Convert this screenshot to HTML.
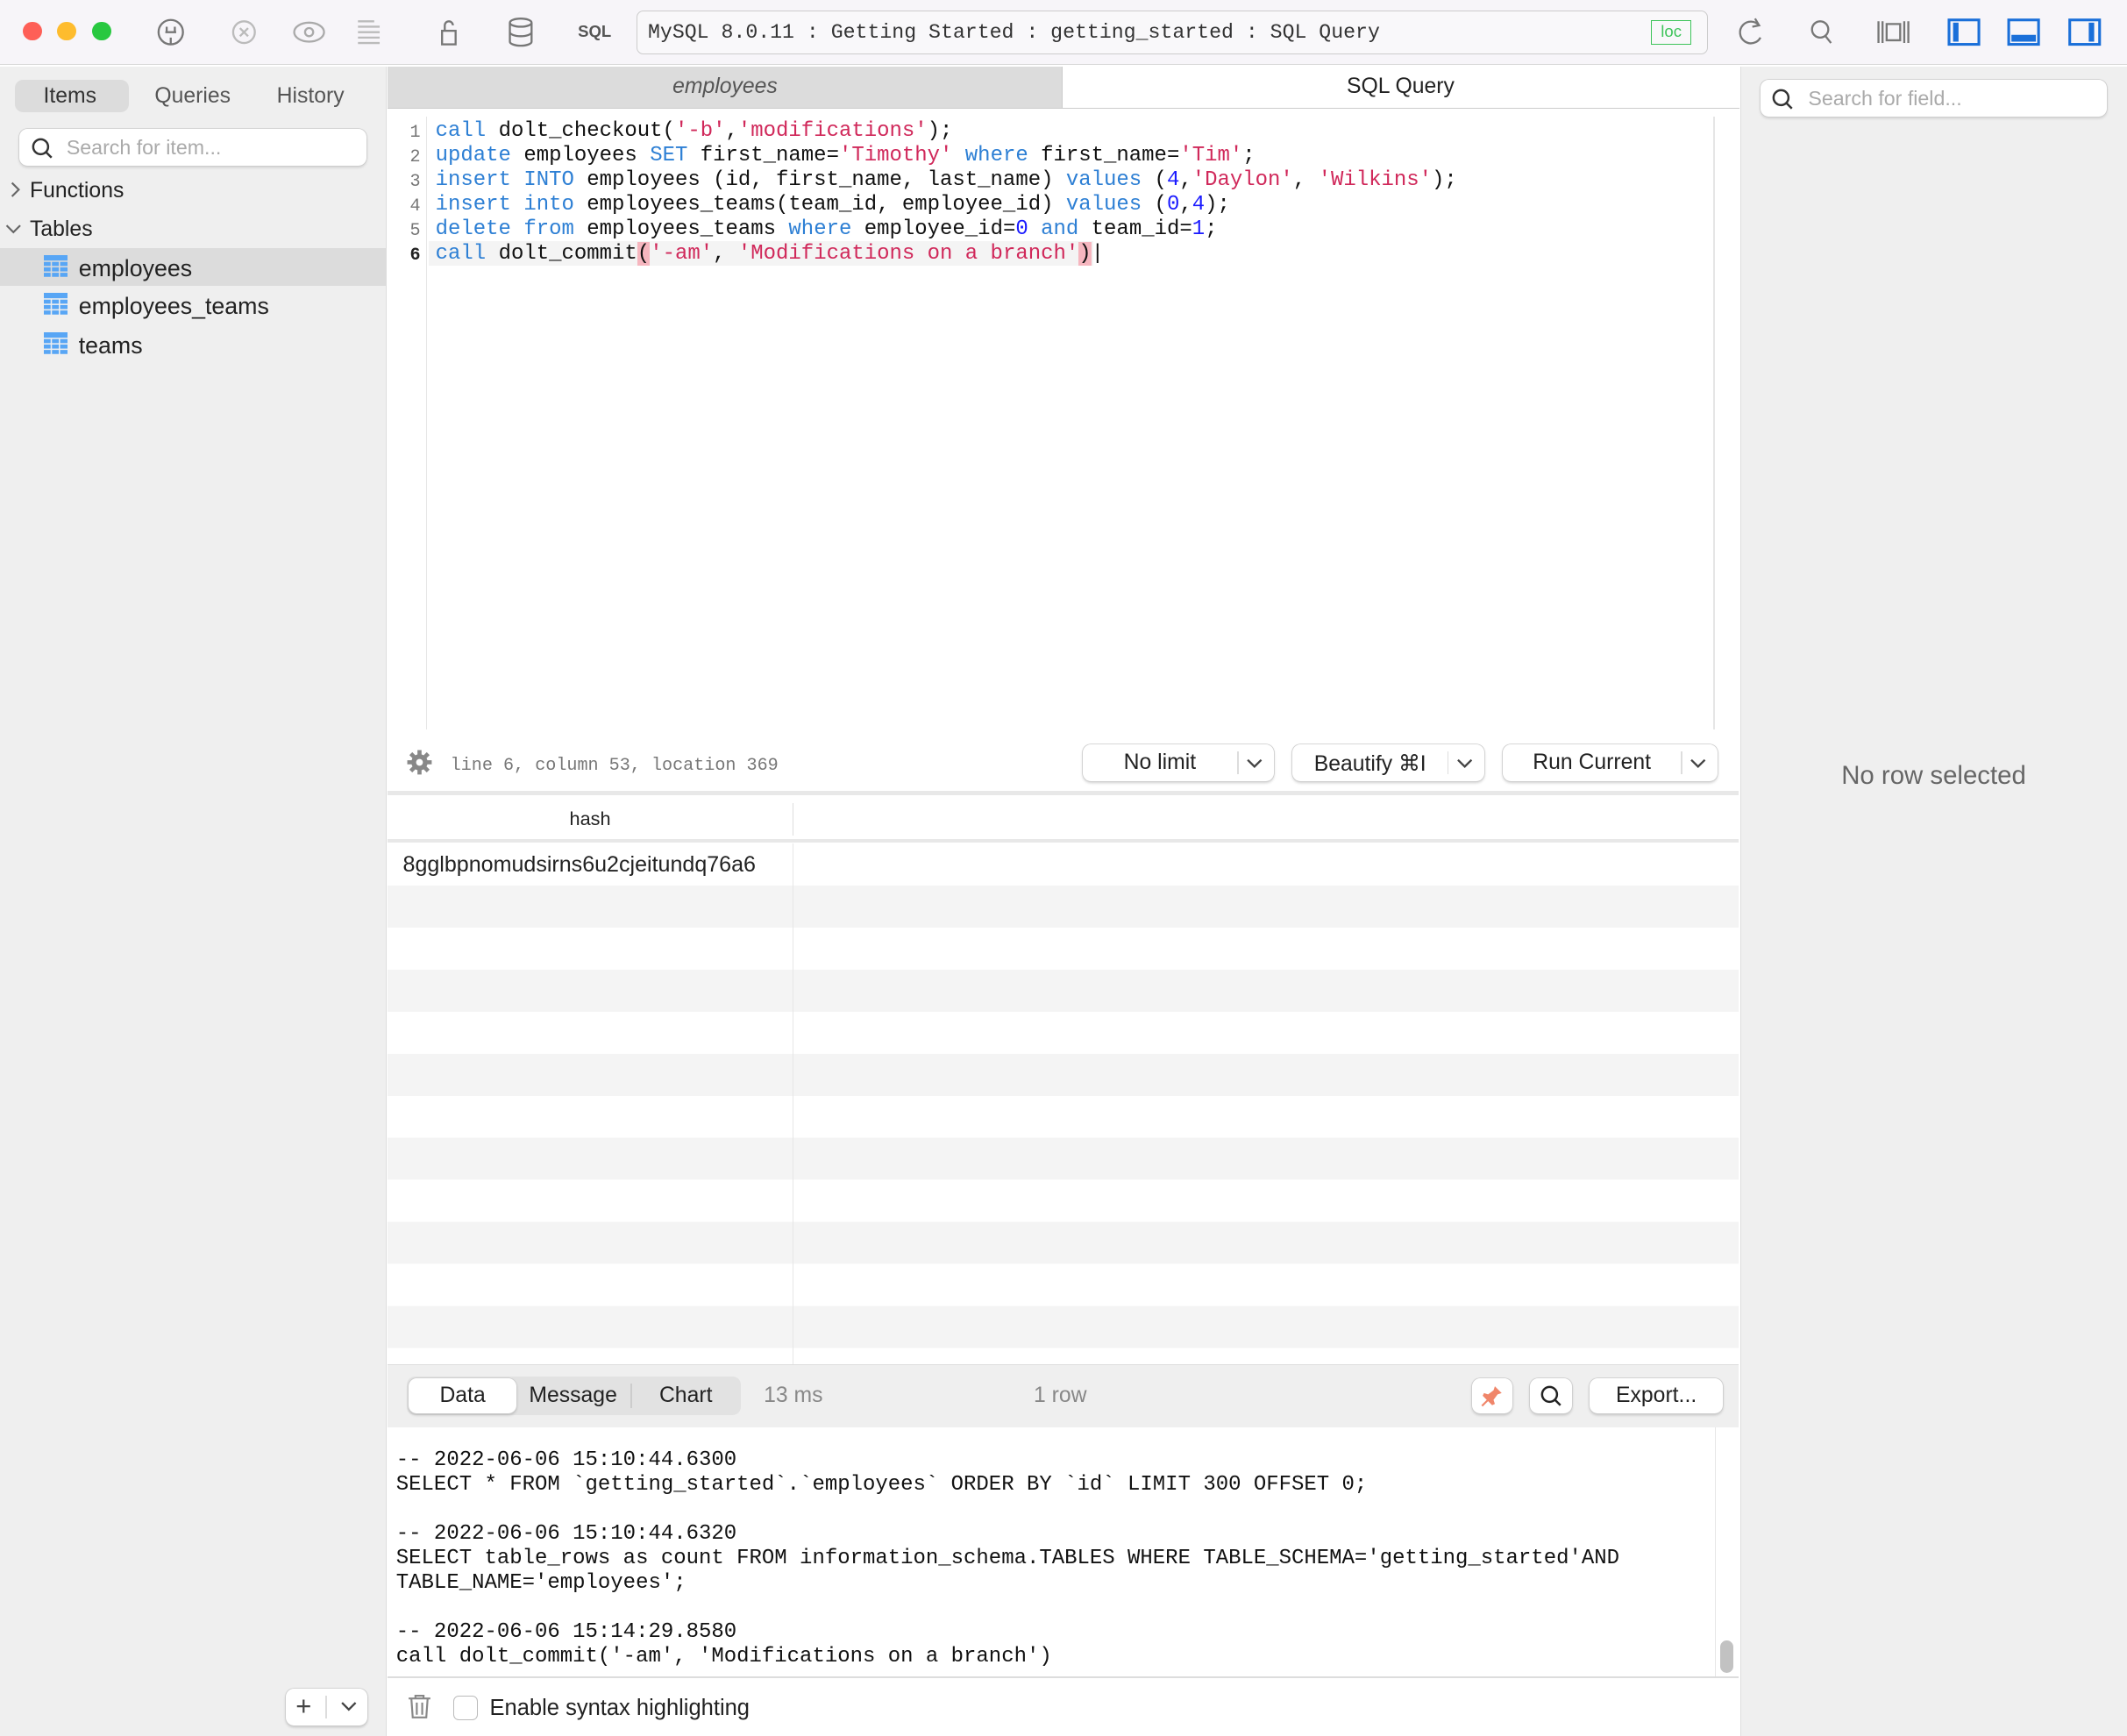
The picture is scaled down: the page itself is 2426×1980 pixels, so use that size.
<!DOCTYPE html>
<html><head><meta charset="utf-8"><style>
*{box-sizing:border-box;margin:0;padding:0}
html,body{width:2426px;height:1980px;overflow:hidden;background:#fff}
#w{zoom:1.5472;width:1568px;height:1280px;position:relative;font-family:"Liberation Sans",sans-serif;color:#222;font-size:16px}
.a{position:absolute}
.mono{font-family:"Liberation Mono",monospace}
.k{color:#2d7fd4}.s{color:#d0285a}.n{color:#1a1aff}
.btn{position:absolute;background:#fff;border-radius:6px;box-shadow:0 0 0 0.5px #ccc,0 1px 2px rgba(0,0,0,.2);font-size:16px;text-align:center}
</style></head><body><div id="w">
<!-- title bar -->
<div class="a" style="left:0;top:0;width:1568px;height:48px;background:#f7f5f9;border-bottom:1px solid #d8d8d8"></div>
<div class="a" style="left:17px;top:16px;width:14px;height:14px;border-radius:50%;background:#fe5f57"></div>
<div class="a" style="left:42px;top:16px;width:14px;height:14px;border-radius:50%;background:#febc2e"></div>
<div class="a" style="left:68px;top:16px;width:14px;height:14px;border-radius:50%;background:#28c840"></div>
<svg class="a" style="left:110px;top:10px" width="360" height="28" fill="none" stroke="#777" stroke-width="1.5">
<circle cx="16" cy="14" r="9"/><path d="M13 10v4M19 10v4M12 14h8M16 18v5"/>
<circle cx="70" cy="14" r="8" stroke="#bbb"/><path d="M67 11l6 6M73 11l-6 6" stroke="#bbb"/>
<ellipse cx="118" cy="14" rx="11" ry="7" stroke="#aaa"/><circle cx="118" cy="14" r="3" stroke="#aaa"/>
<path d="M154 6h12M154 10h16M154 14h16M154 18h16M154 22h16" stroke="#bbb"/>
<rect x="216" y="13" width="10" height="10"/><path d="M218 13v-4a3 3 0 0 1 6 0"/>
<ellipse cx="274" cy="7" rx="8" ry="3"/><path d="M266 7v14a8 3 0 0 0 16 0V7M266 14a8 3 0 0 0 16 0"/>
</svg>
<div class="a" style="left:426px;top:16px;font-size:12px;font-weight:bold;color:#555">SQL</div>
<div class="a mono" style="left:469px;top:8px;width:790px;height:32px;border:1px solid #ccc;border-radius:5px;background:#f9f8fa;font-size:15px;line-height:32px;padding-left:8px;color:#333">MySQL 8.0.11 : Getting Started : getting_started : SQL Query</div>
<div class="a" style="left:1217px;top:15px;width:30px;height:18px;border:1px solid #3ec45a;color:#3ec45a;font-size:12px;text-align:center;line-height:16px">loc</div>
<svg class="a" style="left:1278px;top:10px" width="280" height="28" fill="none" stroke="#777" stroke-width="1.5">
<path d="M19 9a8 8 0 1 0 1 9M16 4l3 5-5 1"/>
<circle cx="64" cy="12" r="6"/><path d="M68 17l4 5"/>
<path d="M107 6v16M110 6v16M126 6v16M129 6v16M113 8h10v12h-10z"/>
<rect x="159" y="5" width="22" height="18" stroke="#1a6fd9" stroke-width="2"/><rect x="162" y="7" width="4" height="14" fill="#1a6fd9" stroke="none"/>
<rect x="203" y="5" width="22" height="18" stroke="#1a6fd9" stroke-width="2"/><rect x="205" y="16" width="18" height="5" fill="#1a6fd9" stroke="none"/>
<rect x="248" y="5" width="22" height="18" stroke="#1a6fd9" stroke-width="2"/><rect x="262" y="7" width="4" height="14" fill="#1a6fd9" stroke="none"/>
</svg>
<!-- left sidebar -->
<div class="a" style="left:0;top:49px;width:285px;height:1231px;background:#efefef;border-right:1px solid #ddd"></div>
<div class="a" style="left:11px;top:59px;width:84px;height:24px;background:#dcdcdc;border-radius:6px"></div>
<div class="a" style="left:32px;top:62px;color:#333">Items</div>
<div class="a" style="left:114px;top:62px;color:#555">Queries</div>
<div class="a" style="left:204px;top:62px;color:#555">History</div>
<div class="a" style="left:14px;top:95px;width:256px;height:27px;background:#fff;border-radius:6px;box-shadow:0 0 0 .5px #ccc,0 1px 2px rgba(0,0,0,.15)"></div>
<svg class="a" style="left:22px;top:100px" width="18" height="18" fill="none" stroke="#333" stroke-width="1.6"><circle cx="8" cy="8" r="5.5"/><path d="M12 12l4 4"/></svg>
<div class="a" style="left:49px;top:100px;color:#aaa;font-size:15px">Search for item...</div>
<svg class="a" style="left:6px;top:134px" width="10" height="12" fill="none" stroke="#666" stroke-width="1.4"><path d="M3 1l5 5-5 5"/></svg>
<div class="a" style="left:22px;top:132px">Functions</div>
<svg class="a" style="left:4px;top:164px" width="12" height="10" fill="none" stroke="#666" stroke-width="1.4"><path d="M1 2l5 5 5-5"/></svg>
<div class="a" style="left:22px;top:160px">Tables</div>
<div class="a" style="left:0;top:183px;width:285px;height:28px;background:#dcdcdc"></div>
<svg class="a" style="left:32px;top:188px" width="18" height="18"><g fill="#58a6f5"><rect x="0" y="0" width="18" height="4"/><rect x="0" y="5" width="5" height="3"/><rect x="6" y="5" width="5" height="3"/><rect x="12" y="5" width="6" height="3"/><rect x="0" y="9" width="5" height="3"/><rect x="6" y="9" width="5" height="3"/><rect x="12" y="9" width="6" height="3"/><rect x="0" y="13" width="5" height="3"/><rect x="6" y="13" width="5" height="3"/><rect x="12" y="13" width="6" height="3"/></g></svg>
<svg class="a" style="left:32px;top:216px" width="18" height="18"><g fill="#58a6f5"><rect x="0" y="0" width="18" height="4"/><rect x="0" y="5" width="5" height="3"/><rect x="6" y="5" width="5" height="3"/><rect x="12" y="5" width="6" height="3"/><rect x="0" y="9" width="5" height="3"/><rect x="6" y="9" width="5" height="3"/><rect x="12" y="9" width="6" height="3"/><rect x="0" y="13" width="5" height="3"/><rect x="6" y="13" width="5" height="3"/><rect x="12" y="13" width="6" height="3"/></g></svg>
<svg class="a" style="left:32px;top:245px" width="18" height="18"><g fill="#58a6f5"><rect x="0" y="0" width="18" height="4"/><rect x="0" y="5" width="5" height="3"/><rect x="6" y="5" width="5" height="3"/><rect x="12" y="5" width="6" height="3"/><rect x="0" y="9" width="5" height="3"/><rect x="6" y="9" width="5" height="3"/><rect x="12" y="9" width="6" height="3"/><rect x="0" y="13" width="5" height="3"/><rect x="6" y="13" width="5" height="3"/><rect x="12" y="13" width="6" height="3"/></g></svg>
<div class="a" style="left:58px;top:188px;font-size:17.3px">employees</div>
<div class="a" style="left:58px;top:216px;font-size:17.3px">employees_teams</div>
<div class="a" style="left:58px;top:245px;font-size:17.3px">teams</div>
<div class="btn" style="left:211px;top:1245px;width:60px;height:27px"></div>
<div class="a" style="left:218px;top:1246px;font-size:20px;color:#444">+</div>
<div class="a" style="left:240px;top:1250px;width:1px;height:17px;background:#ddd"></div>
<svg class="a" style="left:250px;top:1253px" width="14" height="10" fill="none" stroke="#444" stroke-width="1.5"><path d="M2 2l5 5 5-5"/></svg>
<!-- tabs -->
<div class="a" style="left:286px;top:49px;width:497px;height:31px;background:#dcdcdc;border-bottom:1px solid #ccc"></div>
<div class="a" style="left:286px;top:55px;width:497px;text-align:center;font-style:italic;color:#555">employees</div>
<div class="a" style="left:783px;top:49px;width:499px;height:31px;background:#fff;border-bottom:1px solid #ccc;border-left:1px solid #ccc"></div>
<div class="a" style="left:783px;top:55px;width:499px;text-align:center">SQL Query</div>
<!-- editor -->
<div class="a" style="left:314px;top:86px;width:1px;height:452px;background:#e6e6e6"></div>
<div class="a" style="left:1263px;top:86px;width:1px;height:452px;background:#e6e6e6"></div>
<div class="a" style="left:316px;top:178px;width:490px;height:18px;background:#f4f4f4"></div>
<div class="a mono" style="left:290px;top:89px;width:20px;text-align:right;font-size:13px;line-height:18.1px;color:#777">1<br>2<br>3<br>4<br>5<br><b style="color:#222">6</b></div>
<div class="a mono" style="left:321px;top:88px;font-size:15.5px;line-height:18.1px;white-space:pre;color:#111"><span class="k">call</span> dolt_checkout(<span class="s">'-b'</span>,<span class="s">'modifications'</span>);
<span class="k">update</span> employees <span class="k">SET</span> first_name=<span class="s">'Timothy'</span> <span class="k">where</span> first_name=<span class="s">'Tim'</span>;
<span class="k">insert</span> <span class="k">INTO</span> employees (id, first_name, last_name) <span class="k">values</span> (<span class="n">4</span>,<span class="s">'Daylon'</span>, <span class="s">'Wilkins'</span>);
<span class="k">insert</span> <span class="k">into</span> employees_teams(team_id, employee_id) <span class="k">values</span> (<span class="n">0</span>,<span class="n">4</span>);
<span class="k">delete</span> <span class="k">from</span> employees_teams <span class="k">where</span> employee_id=<span class="n">0</span> <span class="k">and</span> team_id=<span class="n">1</span>;
<span class="k">call</span> dolt_commit<span style="background:#f6b6bf">(</span><span class="s">'-am'</span>, <span class="s">'Modifications on a branch'</span><span style="background:#f6b6bf">)</span>|</div>
<!-- status bar -->
<svg class="a" style="left:299px;top:552px" width="20" height="20"><circle cx="10" cy="10" r="6" fill="#888"/><g stroke="#888" stroke-width="3"><path d="M10 1v18M1 10h18M3.6 3.6l12.8 12.8M16.4 3.6L3.6 16.4"/></g><circle cx="10" cy="10" r="2.5" fill="#fff"/></svg>
<div class="a mono" style="left:332px;top:557px;font-size:13px;color:#777">line 6, column 53, location 369</div>
<div class="btn" style="left:798px;top:549px;width:141px;height:27px"></div>
<div class="a" style="left:798px;top:553px;width:114px;text-align:center">No limit</div>
<div class="btn" style="left:953px;top:549px;width:141px;height:27px"></div>
<div class="a" style="left:953px;top:553px;width:114px;text-align:center">Beautify ⌘I</div>
<div class="btn" style="left:1108px;top:549px;width:158px;height:27px"></div>
<div class="a" style="left:1108px;top:553px;width:131px;text-align:center">Run Current</div>
<div class="a" style="left:912px;top:554px;width:1px;height:17px;background:#ddd"></div>
<div class="a" style="left:1067px;top:554px;width:1px;height:17px;background:#ddd"></div>
<div class="a" style="left:1239px;top:554px;width:1px;height:17px;background:#ddd"></div>
<svg class="a" style="left:918px;top:557px" width="350" height="12" fill="none" stroke="#444" stroke-width="1.5"><path d="M2 3l5 5 5-5M157 3l5 5 5-5M329 3l5 5 5-5"/></svg>
<div class="a" style="left:286px;top:583px;width:996px;height:3px;background:#e8e8e8"></div>
<!-- results -->
<div class="a" style="left:286px;top:586px;width:996px;height:35px;background:#fff;border-bottom:3px solid #e8e8e8"></div>
<div class="a" style="left:286px;top:595px;width:298px;text-align:center;font-size:14px">hash</div>
<div class="a" style="left:584px;top:592px;width:1px;height:24px;background:#ddd"></div>
<div class="a" style="left:286px;top:622px;width:996px;height:385px;background:repeating-linear-gradient(#fff 0 31px,#f4f4f4 31px 62px)"></div>
<div class="a" style="left:584px;top:622px;width:1px;height:385px;background:#e6e6e6"></div>
<div class="a" style="left:297px;top:628px;font-size:16.2px">8gglbpnomudsirns6u2cjeitundq76a6</div>
<!-- bottom toolbar -->
<div class="a" style="left:286px;top:1006px;width:996px;height:46px;background:#efefef;border-top:1px solid #ddd"></div>
<div class="a" style="left:300px;top:1015px;width:246px;height:28px;background:#e2e2e2;border-radius:6px"></div>
<div class="btn" style="left:301px;top:1016px;width:80px;height:26px"></div>
<div class="a" style="left:301px;top:1020px;width:80px;text-align:center">Data</div>
<div class="a" style="left:390px;top:1020px">Message</div>
<div class="a" style="left:465px;top:1020px;width:1px;height:18px;background:#ccc"></div>
<div class="a" style="left:486px;top:1020px">Chart</div>
<div class="a" style="left:563px;top:1020px;color:#888">13 ms</div>
<div class="a" style="left:762px;top:1020px;color:#888">1 row</div>
<div class="btn" style="left:1085px;top:1016px;width:30px;height:26px"></div>
<svg class="a" style="left:1091px;top:1020px" width="18" height="18"><path d="M11 2l5 5-3 1-3 4 1 3-2 1-3-3-4 4-1-1 4-4-3-3 1-2 3 1 4-3z" fill="#f0866a"/></svg>
<div class="btn" style="left:1128px;top:1016px;width:31px;height:26px"></div>
<svg class="a" style="left:1134px;top:1020px" width="18" height="18" fill="none" stroke="#222" stroke-width="1.6"><circle cx="8" cy="8" r="5.5"/><path d="M12 12l4 4"/></svg>
<div class="btn" style="left:1172px;top:1016px;width:98px;height:26px"></div>
<div class="a" style="left:1172px;top:1020px;width:98px;text-align:center">Export...</div>
<!-- log -->
<div class="a mono" style="left:292px;top:1068px;font-size:15.5px;line-height:18.1px;white-space:pre;color:#111">-- 2022-06-06 15:10:44.6300
SELECT * FROM `getting_started`.`employees` ORDER BY `id` LIMIT 300 OFFSET 0;

-- 2022-06-06 15:10:44.6320
SELECT table_rows as count FROM information_schema.TABLES WHERE TABLE_SCHEMA='getting_started'AND
TABLE_NAME='employees';

-- 2022-06-06 15:14:29.8580
call dolt_commit('-am', 'Modifications on a branch')</div>
<div class="a" style="left:1264px;top:1052px;width:1px;height:184px;background:#e6e6e6"></div>
<div class="a" style="left:1268px;top:1209px;width:10px;height:24px;border-radius:5px;background:#c2c2c2"></div>
<div class="a" style="left:286px;top:1236px;width:996px;height:1px;background:#ddd"></div>
<svg class="a" style="left:299px;top:1248px" width="20" height="20" fill="none" stroke="#888" stroke-width="1.4"><path d="M2 4h16M7 4V2h6v2M4 4l1 14h10l1-14M8 7v9M12 7v9"/></svg>
<div class="a" style="left:334px;top:1250px;width:18px;height:18px;border:1px solid #bbb;border-radius:4px;background:#fff"></div>
<div class="a" style="left:361px;top:1250px;font-size:16.5px">Enable syntax highlighting</div>
<!-- right panel -->
<div class="a" style="left:1283px;top:49px;width:285px;height:1231px;background:#efefef;border-left:1px solid #ddd"></div>
<div class="a" style="left:1298px;top:59px;width:255px;height:27px;background:#fff;border-radius:6px;box-shadow:0 0 0 .5px #ccc,0 1px 2px rgba(0,0,0,.15)"></div>
<svg class="a" style="left:1305px;top:64px" width="18" height="18" fill="none" stroke="#333" stroke-width="1.6"><circle cx="8" cy="8" r="5.5"/><path d="M12 12l4 4"/></svg>
<div class="a" style="left:1333px;top:64px;color:#aaa;font-size:15px">Search for field...</div>
<div class="a" style="left:1283px;top:561px;width:285px;text-align:center;font-size:19px;color:#666">No row selected</div>
</div></body></html>
